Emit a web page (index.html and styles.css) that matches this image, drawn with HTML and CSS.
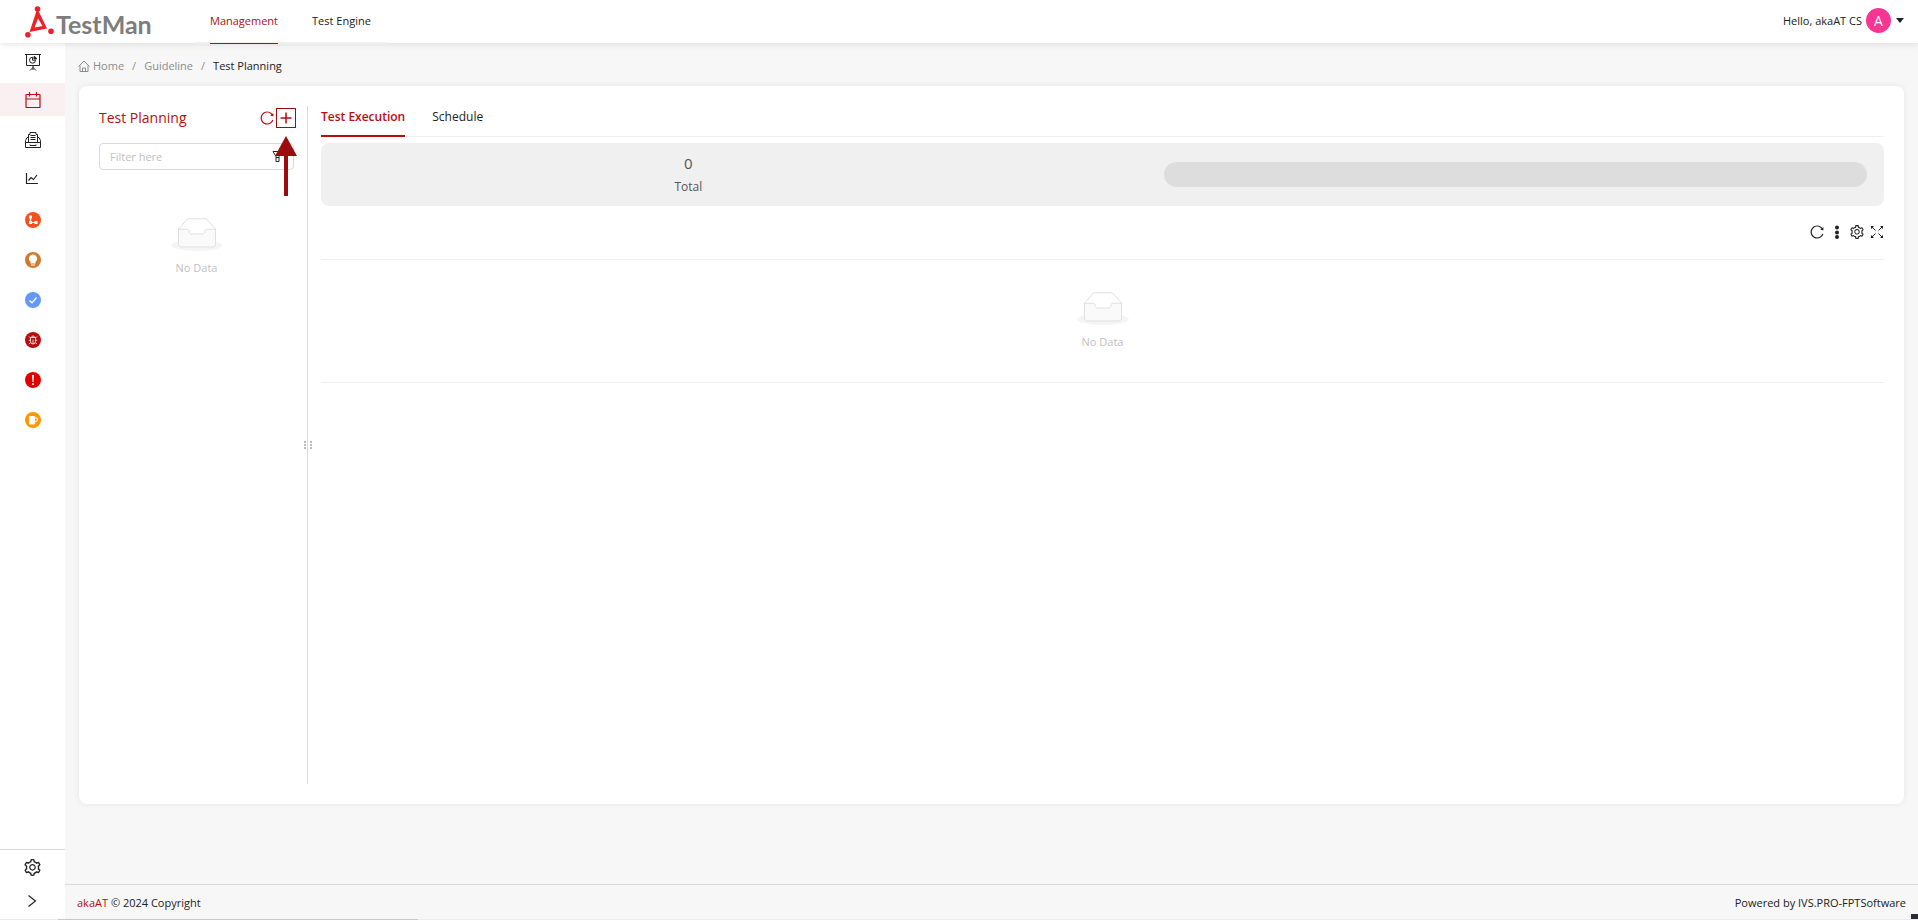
FILE: index.html
```html
<!DOCTYPE html>
<html lang="en">
<head>
  <meta charset="UTF-8" />
  <meta name="viewport" content="width=device-width, initial-scale=1" />
  <title>TestMan - Test Planning</title>
  <link rel="stylesheet" href="styles.css">
</head>
<body>

  <!-- shared icons -->
  <svg class="sprite" aria-hidden="true">
    <symbol id="i-setting" viewBox="64 64 896 896">
      <path d="M924.8 625.7l-65.5-56c3.1-19 4.7-38.4 4.7-57.8s-1.6-38.8-4.7-57.8l65.5-56a32.03 32.03 0 009.3-35.2l-.9-2.6a443.74 443.74 0 00-79.7-137.9l-1.8-2.1a32.12 32.12 0 00-35.1-9.5l-81.3 28.9c-30-24.6-63.5-44-99.7-57.6l-15.7-85a32.05 32.05 0 00-25.8-25.7l-2.7-.5c-52.1-9.4-106.9-9.4-159 0l-2.7.5a32.05 32.05 0 00-25.8 25.7l-15.8 85.4a351.86 351.86 0 00-99 57.4l-81.9-29.1a32 32 0 00-35.1 9.5l-1.8 2.1a446.02 446.02 0 00-79.7 137.9l-.9 2.6c-4.5 12.5-.8 26.5 9.3 35.2l66.3 56.6c-3.1 18.8-4.6 38-4.6 57.1 0 19.2 1.5 38.4 4.6 57.1L99 625.5a32.03 32.03 0 00-9.3 35.2l.9 2.6c18.1 50.4 44.9 96.9 79.7 137.9l1.8 2.1a32.12 32.12 0 0035.1 9.5l81.9-29.1c29.8 24.5 63.1 43.9 99 57.4l15.8 85.4a32.05 32.05 0 0025.8 25.7l2.7.5a449.4 449.4 0 00159 0l2.7-.5a32.05 32.05 0 0025.8-25.7l15.7-85a350 350 0 0099.7-57.6l81.3 28.9a32 32 0 0035.1-9.5l1.8-2.1c34.8-41.1 61.6-87.5 79.7-137.9l.9-2.6c4.5-12.3.8-26.3-9.3-35zM788.3 465.9c2.5 15.1 3.8 30.6 3.8 46.1s-1.3 31-3.8 46.1l-6.6 40.1 74.7 63.9a370.03 370.03 0 01-42.6 73.6L721 702.8l-31.4 25.8c-23.9 19.6-50.5 35-79.3 45.8l-38.1 14.3-17.9 97a377.5 377.5 0 01-85 0l-17.9-97.2-37.8-14.5c-28.5-10.8-55-26.2-78.7-45.7l-31.4-25.9-93.4 33.2c-17-22.9-31.2-47.6-42.6-73.6l75.5-64.5-6.5-40c-2.4-14.9-3.7-30.3-3.7-45.5 0-15.3 1.2-30.6 3.7-45.5l6.5-40-75.5-64.5c11.3-26.1 25.6-50.7 42.6-73.6l93.4 33.2 31.4-25.9c23.7-19.5 50.2-34.9 78.7-45.7l37.9-14.3 17.9-97.2c28.1-3.2 56.8-3.2 85 0l17.9 97 38.1 14.3c28.7 10.8 55.4 26.2 79.3 45.8l31.4 25.8 92.8-32.9c17 22.9 31.2 47.6 42.6 73.6L781.8 426l6.5 39.9zM512 326c-97.2 0-176 78.8-176 176s78.8 176 176 176 176-78.8 176-176-78.8-176-176-176zm79.2 255.2A111.6 111.6 0 01512 614c-29.9 0-58-11.7-79.2-32.8A111.6 111.6 0 01400 502c0-29.9 11.7-58 32.8-79.2C454 401.6 482.1 390 512 390c29.9 0 58 11.6 79.2 32.8A111.6 111.6 0 01624 502c0 29.9-11.7 58-32.8 79.2z"/>
    </symbol>
    <symbol id="i-reload" viewBox="64 64 896 896">
      <path d="M909.1 209.3l-56.4 44.1C775.8 155.1 656.2 92 521.9 92 290 92 102.3 279.5 102 511.5 101.7 743.7 289.8 932 521.9 932c181.3 0 335.8-115 394.6-276.1 1.5-4.2-.7-8.9-4.9-10.3l-56.7-19.5a8 8 0 00-10.1 4.8c-1.8 5-3.8 10-5.9 14.9-17.3 41-42.1 77.8-73.7 109.4A344.77 344.77 0 01655.9 829c-42.3 17.9-87.4 27-133.8 27-46.5 0-91.5-9.1-133.8-27A341.5 341.5 0 01279 755.2a342.16 342.16 0 01-73.7-109.4c-17.9-42.4-27-87.4-27-133.9s9.1-91.5 27-133.9c17.3-41 42.1-77.8 73.7-109.4 31.6-31.6 68.4-56.4 109.3-73.8 42.3-17.9 87.4-27 133.8-27 46.5 0 91.5 9.1 133.8 27a341.5 341.5 0 01109.3 73.8c9.9 9.9 19.2 20.4 27.8 31.4l-60.2 47a8 8 0 003 14.1l175.6 43c5 1.2 9.9-2.6 9.9-7.7l.8-180.9c-.1-6.6-7.8-10.3-13-6.2z"/>
    </symbol>
    <symbol id="i-empty" viewBox="0 0 64 41">
      <g transform="translate(0 1)" fill="none">
        <ellipse fill="#f5f5f5" cx="32" cy="33" rx="32" ry="7"/>
        <g stroke="#d9d9d9">
          <path d="M55 12.76L44.854 1.258C44.367.474 43.656 0 42.907 0H21.093c-.749 0-1.46.474-1.947 1.257L9 12.761V22h46v-9.24z"/>
          <path fill="#fafafa" d="M41.613 15.931c0-1.605.994-2.93 2.227-2.931H55v18.137C55 33.26 53.68 35 52.05 35h-40.1C10.32 35 9 33.259 9 31.137V13h11.16c1.233 0 2.227 1.323 2.227 2.928v.022c0 1.605 1.005 2.901 2.237 2.901h14.752c1.232 0 2.237-1.308 2.237-2.913v-.007z"/>
        </g>
      </g>
    </symbol>
  </svg>

  <header class="header">
    <a class="logo" href="#" aria-label="TestMan">
      <svg width="30" height="34" viewBox="0 0 30 34" fill="#ee2029">
        <path fill-rule="evenodd" d="M11.500 6h2L22 23.500 4.500 27zM13 13.500L9.500 22.500l8-1.500z"/>
        <circle cx="12.500" cy="4" r="2.800"/>
        <circle cx="2.900" cy="29.700" r="2.800"/>
        <circle cx="26" cy="26.200" r="2.800"/>
      </svg>
      <span class="logo-text">TestMan</span>
    </a>
    <nav class="nav">
      <a class="nav-link active" href="#">Management</a>
      <a class="nav-link" href="#">Test Engine</a>
    </nav>
    <button class="user" type="button">
      <span>Hello, <b>akaAT CS</b></span>
      <span class="avatar">A</span>
      <span class="caret"></span>
    </button>
  </header>

  <div class="layout">
    <aside class="sidebar">
      <a class="side-link" href="#" aria-label="Dashboard">
        <svg width="16" height="22" viewBox="0 -4 16 22" fill="none" stroke="#222">
          <path d="M0 1.500h16M1.500 1.500v11h13v-11M8 12.500V17M5 17.500l3-3 3 3"/>
          <path d="M7.500 4.200a3 3 0 1 0 3 3h-3z"/>
          <path d="M9 3.500a3 3 0 0 1 2.500 2.500H9z" fill="#222"/>
        </svg>
      </a>
      <a class="side-link active" href="#" aria-label="Test Planning">
        <svg width="16" height="16" viewBox="0 0 16 16" fill="none" stroke="#b80d0d" stroke-width="1.200">
          <rect x="1" y="2.500" width="14" height="13" rx=".5"/>
          <path d="M1 7h14M4.500 0v4.500M11.500 0v4.500"/>
        </svg>
      </a>
      <a class="side-link" href="#" aria-label="Test Cases">
        <svg width="16" height="18" viewBox="0 0 16 18" fill="none" stroke="#222">
          <path d="M.5 16.500V9.500L2 6.500h1.500V3.500h1.500V1.500h6v2h1.500v3H14l1.500 3v7zM.5 11.500h15M5 13.500v1h6v-1M3.500 6v5.500M12.500 6v5.500"/>
          <path d="M5.500 4.500h5M5.500 6.500h5M5.500 8.500h5"/>
        </svg>
      </a>
      <a class="side-link" href="#" aria-label="Reports">
        <svg width="16" height="16" viewBox="0 0 16 16" fill="none" stroke="#222" stroke-width="1.200">
          <path d="M1.500 1v10.500h11.500M3.500 8.500l2.500-3 2.500 2 3.500-4.500"/>
        </svg>
      </a>
      <a class="side-link" href="#" aria-label="Requirements">
        <svg width="16" height="16" viewBox="0 0 16 16">
          <circle cx="8" cy="8" r="8" fill="#f4511e"/>
          <path d="M5.500 5v5.500h5" fill="none" stroke="#fff" stroke-width="1.200"/>
          <path d="M4 3.500h3v3H4zM4 9h3v3H4zM9.500 9h3v3h-3z" fill="#fff"/>
        </svg>
      </a>
      <a class="side-link" href="#" aria-label="Ideas">
        <svg width="16" height="16" viewBox="0 0 16 16">
          <circle cx="8" cy="8" r="8" fill="#d07a2d"/>
          <path d="M8 2.500a4 4 0 0 1 2.500 7.200v1.800h-5V9.700A4 4 0 0 1 8 2.500zM6 12.500h4v1H6z" fill="#fff"/>
        </svg>
      </a>
      <a class="side-link" href="#" aria-label="Tasks">
        <svg width="16" height="16" viewBox="0 0 16 16">
          <circle cx="8" cy="8" r="8" fill="#6699f5"/>
          <path d="M4.500 8.500l2.500 2.300L11.500 5.500" fill="none" stroke="#fff" stroke-width="1.300"/>
        </svg>
      </a>
      <a class="side-link" href="#" aria-label="Bugs">
        <svg width="16" height="16" viewBox="0 0 16 16">
          <circle cx="8" cy="8" r="8" fill="#b80d0d"/>
          <path d="M5.500 5.500h5v4a2.500 2.500 0 0 1-5 0zM6.500 5.500a1.500 1.500 0 0 1 3 0M8 7.500V12M4 4.500l1.500 1.500M12 4.500L10.500 6M3.800 8.300h1.700M12.200 8.300h-1.700M4 12l1.700-1.500M12 12l-1.700-1.500" fill="none" stroke="#fff" stroke-width=".8"/>
        </svg>
      </a>
      <a class="side-link" href="#" aria-label="Issues">
        <svg width="16" height="16" viewBox="0 0 16 16">
          <circle cx="8" cy="8" r="8" fill="#e00000"/>
          <path d="M7 3h2l-.5 7h-1z" fill="#fff"/>
          <circle cx="8" cy="12" r="1" fill="#fff"/>
        </svg>
      </a>
      <a class="side-link" href="#" aria-label="Breaks">
        <svg width="16" height="16" viewBox="0 0 16 16">
          <circle cx="8" cy="8" r="8" fill="#ff9800"/>
          <rect x="4" y="4" width="6" height="8.500" rx=".8" fill="#fff"/>
          <path d="M10 6h2.300v2.500L10 10" fill="none" stroke="#fff"/>
        </svg>
      </a>

      <div class="side-bottom">
        <button class="side-btn" type="button" aria-label="Settings">
          <svg width="17" height="17" fill="#222"><use href="#i-setting"/></svg>
        </button>
        <button class="side-btn" type="button" aria-label="Expand menu">
          <svg width="14" height="14" viewBox="0 0 14 14" fill="none" stroke="#222" stroke-width="1.200"><path d="M2.500 1.500l7 5.500-7 5.500"/></svg>
        </button>
      </div>
    </aside>

    <div class="page">
      <nav class="breadcrumb">
        <a href="#">
          <svg width="12" height="12" viewBox="0 0 12 12" fill="none" stroke="#8c8c8c"><path d="M.5 6.500L6 1l5.500 5.500M2 5.500v6h8v-6M4.500 11.500V8h3v3.500"/></svg>
          Home
        </a>
        <i>/</i>
        <a href="#">Guideline</a>
        <i>/</i>
        <span class="current">Test Planning</span>
      </nav>

      <main class="card">
        <section class="tree">
          <div class="tree-head">
            <h1>Test Planning</h1>
            <button class="icon-btn" type="button" aria-label="Reload">
              <svg width="14" height="14" fill="#b80d0d"><use href="#i-reload"/></svg>
            </button>
            <div class="add">
              <button class="add-btn" type="button" aria-label="Add">
                <svg width="12" height="12" viewBox="0 0 12 12" stroke="#b80d0d" stroke-width="1.500"><path d="M6 .5v11M.5 6h11"/></svg>
              </button>
              <svg class="arrow" width="22" height="60" viewBox="0 0 22 60" fill="#9c0b0e"><path d="M11 0l11 20h-9v40H9V20H0z"/></svg>
            </div>
          </div>
          <div class="filter">
            <input type="text" placeholder="Filter here" aria-label="Filter here">
            <button class="icon-btn" type="button" aria-label="Filter">
              <svg width="11" height="11" viewBox="0 0 11 11" fill="none" stroke="#222"><path d="M1 .5h9L7 5.500v5H4v-5zM4 6.500h3"/></svg>
            </button>
          </div>
          <div class="empty">
            <svg width="52" height="33"><use href="#i-empty"/></svg>
            <p>No Data</p>
          </div>
        </section>

        <div class="splitter"><span class="dots"></span><span class="dots"></span></div>

        <section class="content">
          <div class="tabs" role="tablist">
            <button class="tab active" type="button" role="tab" aria-selected="true">Test Execution</button>
            <button class="tab" type="button" role="tab" aria-selected="false">Schedule</button>
          </div>

          <div class="summary">
            <div class="total">
              <strong>0</strong>
              <span>Total</span>
            </div>
            <div class="bar"></div>
          </div>

          <div class="toolbar">
            <button class="icon-btn" type="button" aria-label="Reload">
              <svg width="14" height="14" fill="#222"><use href="#i-reload"/></svg>
            </button>
            <button class="icon-btn" type="button" aria-label="More">
              <svg width="14" height="14" viewBox="0 0 14 14" fill="#222"><circle cx="7" cy="2.500" r="2"/><circle cx="7" cy="7.500" r="2"/><circle cx="7" cy="12" r="2"/></svg>
            </button>
            <button class="icon-btn" type="button" aria-label="Settings">
              <svg width="14" height="14" fill="#222"><use href="#i-setting"/></svg>
            </button>
            <button class="icon-btn" type="button" aria-label="Full screen">
              <svg width="14" height="14" viewBox="0 0 14 14" fill="none" stroke="#222"><path d="M2 2l3.500 3.500M12 2L8.500 5.500M2 12l3.500-3.500M12 12L8.500 8.500"/><path d="M1 1h3L1 4zM13 1h-3l3 3zM1 13h3l-3-3zM13 13h-3l3-3z" fill="#222" stroke="none"/></svg>
            </button>
          </div>

          <div class="grid-body">
            <div class="empty">
              <svg width="52" height="33"><use href="#i-empty"/></svg>
              <p>No Data</p>
            </div>
          </div>
        </section>
      </main>

      <footer class="footer">
        <span><a href="#">akaAT</a> © 2024 Copyright</span>
        <span>Powered by <b>IVS.PRO-FPTSoftware</b></span>
      </footer>
    </div>
  </div>

  <div class="scroll-track"><div class="scroll-thumb"></div></div>
  <div class="corner"></div>

</body>
</html>
```

FILE: styles.css
```css
* {
  box-sizing: border-box;
}

body {
  margin: 0;
  min-height: 100vh;
  display: flex;
  flex-direction: column;
  background: #f7f7f7;
  color: #222;
  font-family: "Open Sans", "Noto Sans", sans-serif;
  font-size: 11px;
  line-height: 20px;
}

a {
  color: inherit;
  text-decoration: none;
}

button {
  padding: 0;
  border: none;
  background: none;
  color: inherit;
  font: inherit;
  cursor: pointer;
}

svg {
  display: block;
}

b {
  font-weight: 500;
}

.sprite {
  display: none;
}

/* Header */
.header {
  display: flex;
  height: 43px;
  padding: 0 14px 0 25px;
  background: #fff;
  box-shadow: 0 1px 6px rgba(0, 0, 0, 0.12);
  position: relative;
  z-index: 2;
}

.logo {
  display: flex;
  gap: 1px;
  width: 169px;
  padding-top: 5px;
}

.logo-text {
  padding-top: 4px;
  color: #7d7d7d;
  font-family: Lato, sans-serif;
  font-size: 25px;
  font-weight: 700;
  line-height: 30px;
}

.nav {
  display: flex;
  gap: 34px;
  height: 44px;
  padding: 0 16px;
  box-shadow: inset 0 -2px #f0f0f0;
}

.nav-link {
  padding: 11px 0 12px;
  border-bottom: 1px solid transparent;
}

.nav-link.active {
  color: #b80d0d;
  border-bottom-color: #b80d0d;
}

.user {
  display: flex;
  align-items: center;
  gap: 4px;
  height: 41px;
  margin-left: auto;
}

.avatar {
  width: 25px;
  height: 25px;
  border-radius: 50%;
  background: #f73593;
  color: #fff;
  font-size: 14px;
  line-height: 25px;
}

.caret {
  margin-left: 1px;
  border: 4px solid transparent;
  border-top: 5px solid #222;
  border-bottom: none;
}

/* Sidebar */
.layout {
  flex: 1;
  display: flex;
}

.sidebar {
  display: flex;
  flex-direction: column;
  gap: 7px;
  width: 65px;
  background: #fff;
}

.side-link {
  display: flex;
  align-items: center;
  justify-content: center;
  height: 33px;
}

.side-link.active {
  background: #fbf0f1;
}

.side-bottom {
  margin-top: auto;
  padding-bottom: 2px;
  border-top: 1px solid #d9d9d9;
}

.side-btn {
  display: flex;
  align-items: center;
  justify-content: center;
  width: 100%;
  height: 34px;
}

/* Page */
.page {
  flex: 1;
  display: flex;
  flex-direction: column;
  min-width: 0;
}

.breadcrumb {
  display: flex;
  gap: 8px;
  padding: 13px 13px 10px;
  color: #8c8c8c;
}

.breadcrumb a {
  display: flex;
  align-items: center;
  gap: 3px;
}

.breadcrumb i {
  font-style: normal;
}

.breadcrumb .current {
  color: #222;
}

.card {
  flex: 1;
  display: flex;
  margin: 0 14px 80px;
  padding: 20px;
  border-radius: 8px;
  background: #fff;
  box-shadow: 0 0 6px rgba(0, 0, 0, 0.08);
}

.tree {
  width: 195px;
}

.tree-head {
  display: flex;
  align-items: center;
  gap: 2px;
  height: 24px;
}

.tree-head h1 {
  flex: 1;
  margin: 0;
  color: #b80d0d;
  font-size: 14px;
  font-weight: 500;
}

.add {
  position: relative;
  margin-right: -2px;
}

.add-btn {
  display: flex;
  align-items: center;
  justify-content: center;
  width: 20px;
  height: 20px;
  border: 1px solid #9c0b0e;
}

/* pointer under the add button */
.arrow {
  position: absolute;
  top: 28px;
  left: -1px;
  z-index: 1;
}

.filter {
  display: flex;
  align-items: center;
  height: 27px;
  margin-top: 13px;
  padding: 0 10px;
  border: 1px solid #d9d9d9;
  border-radius: 4px;
}

.filter input {
  flex: 1;
  min-width: 0;
  padding: 0;
  border: none;
  outline: none;
  font: inherit;
}

.filter input::placeholder {
  color: #bfbfbf;
}

.empty {
  display: flex;
  flex-direction: column;
  align-items: center;
  gap: 7px;
  color: #bfbfbf;
}

.empty p {
  margin: 0;
}

.tree .empty {
  margin-top: 48px;
}

.splitter {
  display: flex;
  align-items: center;
  justify-content: center;
  gap: 4px;
  width: 1px;
  margin: 0 13px;
  background: #d9d9d9;
}

.dots {
  flex: none;
  width: 2px;
  height: 8px;
  background: repeating-linear-gradient(#bbb 0 2px, transparent 2px 3px);
}

.content {
  flex: 1;
  min-width: 0;
}

.tabs {
  display: flex;
  gap: 27px;
  border-bottom: 1px solid #f0f0f0;
}

.tab {
  height: 31px;
  margin-bottom: -1px;
  padding-bottom: 7px;
  border-bottom: 2px solid transparent;
  font-size: 12px;
  font-weight: 500;
}

.tab.active {
  border-bottom-color: #b80d0d;
  color: #b80d0d;
  font-weight: 600;
}

.summary {
  display: flex;
  align-items: center;
  justify-content: space-between;
  height: 63px;
  margin-top: 6px;
  border-radius: 8px;
  background: #f0f0f0;
  color: #555;
}

.total {
  display: flex;
  flex-direction: column;
  align-items: center;
  gap: 4px;
  width: 47%;
  font-size: 12px;
  font-weight: 500;
}

.total strong {
  font-size: 15px;
  font-weight: 500;
}

.bar {
  width: 45%;
  height: 25px;
  margin-right: 17px;
  border-radius: 13px;
  background: #ddd;
}

.toolbar {
  display: flex;
  align-items: center;
  justify-content: flex-end;
  gap: 6px;
  height: 53px;
  padding-bottom: 2px;
}

.grid-body {
  padding: 32px 0 30px;
  border-top: 1px solid #f0f0f0;
  border-bottom: 1px solid #f0f0f0;
}

/* Footer */
.footer {
  display: flex;
  justify-content: space-between;
  padding: 8px 12px 7px;
  border-top: 1px solid #d9d9d9;
}

.footer a {
  color: #b80d0d;
}

/* Window edge */
.scroll-track {
  position: fixed;
  bottom: 0;
  left: 0;
  width: 100%;
  height: 1px;
  padding-left: 3%;
  background: #ececec;
}

.scroll-thumb {
  width: 360px;
  height: 1px;
  background: #c8c8c8;
}

.corner {
  position: fixed;
  right: 0;
  bottom: 1px;
  width: 7px;
  height: 5px;
  background: #2b2b36;
}
```
